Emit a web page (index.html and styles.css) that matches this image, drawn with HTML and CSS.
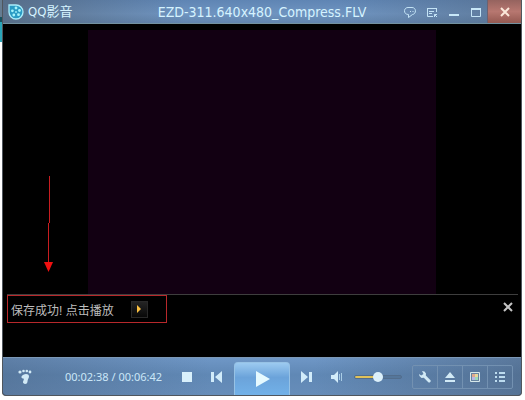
FILE: index.html
```html
<!DOCTYPE html>
<html lang="zh-Hans">
<head>
  <meta charset="UTF-8" />
  <meta name="viewport" content="width=device-width, initial-scale=1.0" />
  <title>QQ影音</title>
  <link rel="stylesheet" href="styles.css">
</head>
<body>
  <div class="player">
    <header class="titlebar">
      <div class="brand">
        <svg width="16" height="16" viewBox="0 0 16 16">
          <path d="M1 1h7a7 7 0 1 1-7 7z" fill="#2a9bc4" stroke="#a9edfa" stroke-width="1.3"/>
          <g fill="#a4f3fb">
            <circle cx="8" cy="4" r="1.4"/><circle cx="11.5" cy="6.5" r="1.4"/>
            <circle cx="10.5" cy="10.7" r="1.4"/><circle cx="5.8" cy="11" r="1.4"/>
            <circle cx="4.4" cy="6.8" r="1.4"/><circle cx="8" cy="8" r="0.9"/>
          </g>
        </svg>
        <span>QQ影音</span>
      </div>
      <div class="file-name">EZD-311.640x480_Compress.FLV</div>
      <div class="window-buttons">
        <button aria-label="反馈">
          <svg width="12" height="12" viewBox="0 0 12 12" fill="none" stroke="#c4e4f6">
            <path d="M4.500 8.500C-1 8.500-.5 1.500 4 1.500h4C12.500 1.500 12.500 8 8.500 8.500L4.500 11.500V8.500M6 5.500h1M8.500 5.500h1"/>
          </svg>
        </button>
        <button aria-label="菜单">
          <svg width="12" height="12" viewBox="0 0 12 12" fill="none" stroke="#c4e4f6">
            <path d="M7 10.500H1.500v-8h9V6M1 2.500h10M3 5.500h5M3 7.500h3M11 11L8.500 8.500M8.500 11V8.500H11"/>
          </svg>
        </button>
        <button aria-label="最小化">
          <svg width="12" height="12" viewBox="0 0 12 12"><path d="M1 8h10v2H1z" fill="#c8e8f8"/></svg>
        </button>
        <button aria-label="最大化">
          <svg width="12" height="12" viewBox="0 0 12 12"><path d="M1.500 2.500h9v8h-9z" fill="none" stroke="#c4e4f6"/><path d="M1 2h10v2H1z" fill="#c8e8f8"/></svg>
        </button>
        <button class="close" aria-label="关闭">
          <svg width="12" height="12" viewBox="0 0 12 12"><path d="M2 2l8 8M10 2l-8 8" stroke="#fbe8da" stroke-width="2"/></svg>
        </button>
      </div>
    </header>

    <main class="screen">
      <div class="video"></div>
      <svg class="arrow" width="12" height="96" viewBox="0 0 12 96">
        <path d="M6 0h1v47H6zM5 47h1v40H5z" fill="#c81d20"/>
        <path d="M1 86h9l-4.500 10z" fill="#f01010"/>
      </svg>
    </main>

    <section class="notice">
      <div class="saved">
        <span>保存成功! 点击播放</span>
        <button class="play-saved" aria-label="播放">
          <svg width="6" height="8" viewBox="0 0 6 8"><path d="M1 0l4 4-4 4z" fill="#fcc040"/></svg>
        </button>
      </div>
      <button class="dismiss" aria-label="关闭提示">
        <svg width="10" height="10" viewBox="0 0 10 10"><path d="M1 1l8 8M9 1L1 9" stroke="#c4c4c4" stroke-width="2"/></svg>
      </button>
    </section>

    <footer class="controls">
      <button class="footprint" aria-label="播放足迹">
        <svg width="14" height="16" viewBox="0 0 14 16" fill="#d2eaf6">
          <circle cx="2" cy="3" r="1.600"/><circle cx="5.500" cy="2" r="1.300"/><circle cx="8.800" cy="2" r="1.300"/><circle cx="12" cy="3" r="1.400"/>
          <path d="M3.500 7.500C5 4.500 11 4 11 7.500c0 2-1.500 2.500-1.500 5 0 3.500-5 3-4.500.3C5.200 11.500 6.500 10.500 5.500 9.500 4.500 9.500 3 9 3.500 7.500z"/>
        </svg>
      </button>
      <div class="time">00:02:38 / 00:06:42</div>
      <div class="transport">
        <button aria-label="停止">
          <svg width="10" height="10" viewBox="0 0 10 10"><path d="M0 0h10v10H0z" fill="#d8f0fc"/></svg>
        </button>
        <button aria-label="上一个">
          <svg width="12" height="12" viewBox="0 0 12 12" fill="#d2ecfa"><path d="M0 1h3v10H0zM11 0v12L4 6z"/></svg>
        </button>
        <button class="play" aria-label="播放">
          <svg width="16" height="16" viewBox="0 0 16 16"><path d="M2 0l14 8-14 8z" fill="#e6faff"/></svg>
        </button>
        <button aria-label="下一个">
          <svg width="12" height="12" viewBox="0 0 12 12" fill="#d2ecfa"><path d="M8 1h3v10H8zM0 0v12l7-6z"/></svg>
        </button>
        <button aria-label="静音">
          <svg width="13" height="12" viewBox="0 0 13 12"><path d="M0 4h3l4-4v12L3 8H0z" fill="#d2ecfa"/><path d="M8.500 3v6M10.500 2v8" stroke="#a9cde6"/></svg>
        </button>
      </div>
      <input class="volume" type="range" min="0" max="100" value="50" aria-label="音量">
      <div class="tools">
        <button aria-label="工具">
          <svg width="12" height="12" viewBox="0 0 12 12"><path d="M3 0l2.500.5L7 2.500 6.800 4.500l4.700 4.700c.8 1.300-.8 2.900-2.200 2L4.800 6.800 2.500 7 .5 5 0 3l2.200 1.600L4.500 3z" fill="#d2eaf6"/></svg>
        </button>
        <button aria-label="打开">
          <svg width="12" height="12" viewBox="0 0 12 12" fill="#d2eaf6"><path d="M6 1l5 6H1zM1 9h10v2H1z"/></svg>
        </button>
        <button aria-label="画面">
          <svg width="12" height="12" viewBox="0 0 12 12">
            <path d="M1.500 1.500h9v9h-9z" fill="#66839f" stroke="#d6e8ea"/>
            <path d="M3 3h3v3H3z" fill="#dda890"/><path d="M6 3h3v3H6z" fill="#e8d69a"/>
            <path d="M3 6h3v3H3z" fill="#b8b6e4"/><path d="M6 6h3v3H6z" fill="#9cd9b8"/>
          </svg>
        </button>
        <button aria-label="播放列表">
          <svg width="12" height="12" viewBox="0 0 12 12" fill="#bddcef"><path d="M1 1h2v2H1zM1 5h2v2H1zM1 9h2v2H1zM5 1h6v2H5zM5 5h6v2H5zM5 9h6v2H5z"/></svg>
        </button>
      </div>
    </footer>
  </div>
</body>
</html>
```

FILE: styles.css
```css
* {
  box-sizing: border-box;
}
body {
  margin: 0;
  padding: 0 3px 4px 2px;
  height: 100vh;
  font-family: "Noto Sans", "Noto Sans CJK SC", sans-serif;
  background: linear-gradient(#657c91 0 17px, #15525f 17px 22px, #2aa5b8 22px 42px, #fff 42px) no-repeat left / 2px 100%;
}
button {
  display: flex;
  align-items: center;
  justify-content: center;
  margin: 0;
  padding: 0;
  border: none;
  background: none;
  cursor: pointer;
}
.player {
  display: flex;
  flex-direction: column;
  height: 100%;
  background: #000;
  border: 1px solid #50565d;
  border-top: none;
  border-radius: 0 0 4px 4px;
  overflow: hidden;
}

/* title bar */
.titlebar {
  display: grid;
  grid-template-columns: 1fr auto 1fr;
  height: 24px;
  flex: none;
  align-items: center;
  color: #d5f3ff;
  font-family: "DejaVu Sans Condensed", "Noto Sans CJK SC", sans-serif;
  line-height: 20px;
  background:
    linear-gradient(90deg, rgba(82,99,118,0.7), transparent 35% 65%, rgba(82,104,130,0.6)),
    linear-gradient(#5f85b4, #6f94c0 60%, #6285ae);
  border-bottom: 1px solid #7392a0;
}
.brand {
  display: flex;
  align-items: center;
  gap: 4px;
  padding-left: 5px;
  font-size: 13px;
}
.file-name {
  font-size: 14px;
}
.window-buttons {
  display: flex;
  justify-content: flex-end;
  height: 100%;
}
.window-buttons button {
  width: 22px;
}
.window-buttons .close {
  width: 34px;
  background: linear-gradient(#95635f, #b77770 50%, #945951);
  border-left: 1px solid #6a6272;
}

/* picture area */
.screen {
  position: relative;
  display: flex;
  justify-content: center;
  flex: 1;
  padding-top: 6px;
}
.video {
  width: 67%;
  background: #120012;
}
.arrow {
  position: absolute;
  left: 40px;
  bottom: 22px;
}
.notice {
  display: flex;
  justify-content: space-between;
  align-items: flex-start;
  flex: none;
  height: 63px;
  margin: 0 3px 0 4px;
  border-top: 1px solid #3e3e3e;
}
.saved {
  display: flex;
  align-items: center;
  gap: 17px;
  width: 160px;
  height: 28px;
  padding-left: 3px;
  border: 1px solid #b8282b;
  color: #bdbdbd;
  font-size: 12px;
  font-family: "Liberation Sans", "Noto Sans CJK SC", sans-serif;
}
.play-saved {
  width: 17px;
  height: 17px;
  background: linear-gradient(#242424, #080808);
  border: 1px solid #292929;
}
.dismiss {
  margin: 7px 5px 0 0;
}

/* control bar */
.controls {
  display: flex;
  align-items: center;
  flex: none;
  height: 38px;
  padding: 0 8px 0 15px;
  background:
    linear-gradient(90deg, rgba(70,92,120,0.4), transparent 40% 60%, rgba(70,90,115,0.5)),
    linear-gradient(#6f97c6, #6088b5 45%, #678db9);
  border-top: 1px solid #7c98b6;
}
.time {
  width: 107px;
  margin-left: 33px;
  color: #cbe7f8;
  font-size: 11px;
  line-height: 16px;
  white-space: nowrap;
}
.transport {
  display: flex;
  align-self: stretch;
}
.transport button {
  width: 30px;
}
.transport .play {
  width: 56px;
  margin: 4px 2px 0;
  background: linear-gradient(#9ccaf0, #6ba3da 45%, #72b1e8);
  border: 1px solid #97c2e5;
  border-bottom: none;
  border-radius: 4px 4px 0 0;
}
.volume {
  appearance: none;
  width: 48px;
  height: 12px;
  margin: 0 auto 0 2px;
  background: none;
}
.volume::-webkit-slider-runnable-track {
  height: 4px;
  border: 1px solid #526d8c;
  border-radius: 2px;
  background: linear-gradient(90deg, #e0c25a 50%, #55769a 50%);
}
.volume::-webkit-slider-thumb {
  appearance: none;
  width: 10px;
  height: 10px;
  margin-top: -4px;
  border-radius: 50%;
  background: #dcf0fb;
}
.tools {
  display: flex;
  height: 24px;
  border: 1px solid #7391b1;
  border-radius: 2px;
}
.tools button {
  width: 24px;
}
.tools button + button {
  width: 25px;
  border-left: 1px solid #7391b1;
}
```
